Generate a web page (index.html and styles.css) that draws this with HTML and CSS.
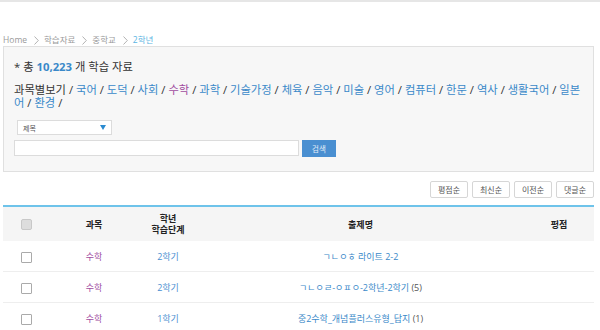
FILE: index.html
```html
<!DOCTYPE html>
<html lang="ko">

<head>
    <meta charset="UTF-8">
    <title>학습자료 - 중학교 2학년</title>
    <link rel="stylesheet" href="styles.css">
</head>

<body>
    <div id="topLine"></div>
    <div id="page">
        <div class="breadcrumb">
            <span>Home</span><svg class="sep" width="5" height="9" viewBox="0 0 5 9"><path d="M0.5 0.5 L4.3 4.5 L0.5 8.5" fill="none" stroke="#aaa" stroke-width="0.9"/></svg>
            <span>학습자료</span><svg class="sep" width="5" height="9" viewBox="0 0 5 9"><path d="M0.5 0.5 L4.3 4.5 L0.5 8.5" fill="none" stroke="#aaa" stroke-width="0.9"/></svg>
            <span>중학교</span><svg class="sep" width="5" height="9" viewBox="0 0 5 9"><path d="M0.5 0.5 L4.3 4.5 L0.5 8.5" fill="none" stroke="#aaa" stroke-width="0.9"/></svg>
            <span class="current">2학년</span>
        </div>
        <div class="searchBox">
            <p class="total">* 총 <b>10,223</b> 개 학습 자료</p>
            <p class="subjects">과목별보기 / <a>국어</a> / <a>도덕</a> / <a>사회</a> / <a class="on">수학</a> / <a>과학</a> / <a>기술가정</a> / <a>체육</a> / <a>음악</a> / <a>미술</a> / <a>영어</a> / <a>컴퓨터</a> / <a>한문</a> / <a>역사</a> / <a>생활국어</a> / <a>일본어</a> / <a>환경</a> /</p>
            <div class="selectBox">
                <span>제목</span>
                <span class="arrow"></span>
            </div>
            <div class="searchRow">
                <input type="text" class="searchInput">
                <button class="searchButton">검색</button>
            </div>
        </div>
        <div class="sortRow">
            <button class="sortButton">평점순</button>
            <button class="sortButton">최신순</button>
            <button class="sortButton">이전순</button>
            <button class="sortButton">댓글순</button>
        </div>
        <table class="list">
            <colgroup>
                <col class="cCheck">
                <col class="cSubject">
                <col class="cGrade">
                <col class="cTitle">
                <col class="cScore">
            </colgroup>
            <thead>
                <tr>
                    <th><span class="check head"></span></th>
                    <th>과목</th>
                    <th>학년<br>학습단계</th>
                    <th>출제명</th>
                    <th>평점</th>
                </tr>
            </thead>
            <tbody>
                <tr>
                    <td><span class="check"></span></td>
                    <td class="subject">수학</td>
                    <td class="grade">2학기</td>
                    <td class="title">ㄱㄴㅇㅎ 라이트 2-2</td>
                    <td></td>
                </tr>
                <tr>
                    <td><span class="check"></span></td>
                    <td class="subject">수학</td>
                    <td class="grade">2학기</td>
                    <td class="title">ㄱㄴㅇㄹ-ㅇㅍㅇ-2학년-2학기 <span class="count">(5)</span></td>
                    <td></td>
                </tr>
                <tr>
                    <td><span class="check"></span></td>
                    <td class="subject">수학</td>
                    <td class="grade">1학기</td>
                    <td class="title">중2수학_개념플러스유형_답지 <span class="count">(1)</span></td>
                    <td></td>
                </tr>
            </tbody>
        </table>
    </div>
</body>

</html>
```

FILE: styles.css
```css
body, p { margin: 0; padding: 0; }
body { font-family: "Open Sans", "Noto Sans CJK KR", sans-serif; background-color: #fff; color: #333; overflow: hidden; }
#topLine { height: 2px; background-color: #e6e6e6; }
#page { width: 591px; margin-left: 3px; }

.breadcrumb { font-size: 8.5px; color: #9a9a9a; margin-top: 32px; height: 12px; line-height: 12px; white-space: nowrap; display: flex; align-items: center; }
.breadcrumb .sep { margin: 0 5px 0 7px; }
.breadcrumb .current { color: #5ab4e2; }

.searchBox { background-color: #f7f7f7; border: 1px solid #e0e0e0; padding: 10px 7px 14px 10px; height: 100px; }
.total { font-size: 11.3px; line-height: 20px; }
.total b { color: #3a89c9; }
.subjects { font-size: 11.3px; line-height: 13px; margin-top: 6px; }
.subjects a { color: #3a89c9; }
.subjects a.on { color: #a04ca0; }

.selectBox { width: 88px; height: 13px; margin: 11px 0 0 3px; background-color: #fff; border: 1px solid #dcdcdc; padding-left: 5px; display: flex; align-items: center; justify-content: space-between; font-size: 7px; color: #555; }
.selectBox .arrow { width: 0; height: 0; border-left: 3px solid transparent; border-right: 3px solid transparent; border-top: 5px solid #2a8ad0; margin-right: 5px; }

.searchRow { display: flex; align-items: flex-start; margin-top: 5px; }
.searchInput { width: 283px; height: 14px; padding: 0; border: 1px solid #dcdcdc; background-color: #fff; margin: 0; }
.searchButton { width: 34px; height: 17px; margin-left: 3px; background-color: #4a8fd1; color: #e4eef8; border: none; font-family: inherit; font-size: 7.5px; padding: 0; }

.sortRow { display: flex; justify-content: flex-end; gap: 4px; margin-top: 9px; }
.sortButton { width: 38px; height: 17px; padding: 0; background-color: #fff; border: 1px solid #d6d6d6; border-radius: 2px; font-family: inherit; font-size: 8px; color: #555; }

.list { width: 100%; border-collapse: collapse; margin-top: 7px; border-top: 2px solid #6ec3ea; font-size: 9px; }
.cCheck { width: 46px; }
.cSubject { width: 90px; }
.cGrade { width: 58px; }
.cScore { width: 70px; }
.list th { background-color: #f5f5f5; height: 34px; padding: 0; font-weight: bold; color: #222; line-height: 11px; }
.list td { height: 30px; padding: 0; text-align: center; border-bottom: 1px solid #eeeeee; }
.list .subject { color: #a04ca0; }
.list .grade { color: #4a8fd1; }
.list .title { color: #3a89c9; }
.list .count { color: #555; }
.check { display: inline-block; width: 9px; height: 9px; border: 1px solid #aaa; background-color: #fff; border-radius: 1px; vertical-align: middle; }
.check.head { background-color: #ddd; border-color: #c8c8c8; border-radius: 2px; }
```
